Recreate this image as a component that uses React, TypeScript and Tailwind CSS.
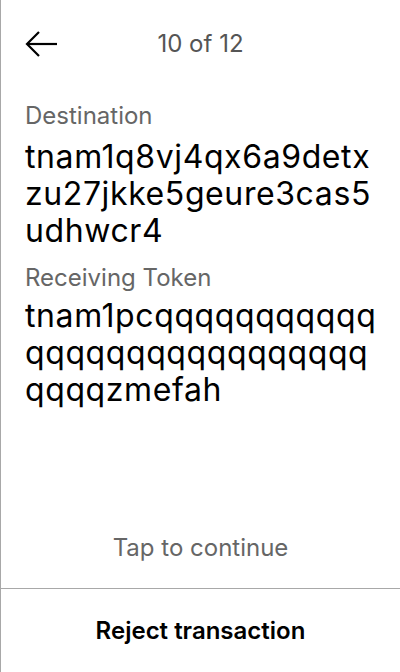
import React from "react";

const TOKEN = "tnam1pc" + "q".repeat(32) + "zmefah";

const App: React.FC = () => {
  return (
    <div
      className="flex h-[672px] w-[400px] flex-col border-l border-[#a8a8a8] bg-white text-black"
      style={{ fontFamily: "Inter, 'Liberation Sans', sans-serif" }}
    >
      <header className="relative flex h-[88px] items-center justify-center">
        <button className="absolute left-[24px] top-[30px]" aria-label="Back">
          <svg width="34" height="28" viewBox="0 0 34 28" fill="none" stroke="black" strokeWidth="2.2">
            <path d="M32 14H2" />
            <path d="M14 2L2 14l12 12" />
          </svg>
        </button>
        <span className="text-[24px] leading-[32px] text-[#555]">10 of 12</span>
      </header>

      <main className="flex flex-1 flex-col pl-[24px] pr-[20px] pt-[14px]">
        <div className="text-[24px] leading-[28px] text-[#666]">Destination</div>
        <div className="mt-[8px] break-all text-[32px] leading-[37px] tracking-[0.6px]">
          tnam1q8vj4qx6a9detxzu27jkke5geure3cas5udhwcr4
        </div>
        <div className="mt-[15px] text-[24px] leading-[28px] text-[#666]">Receiving Token</div>
        <div className="mt-[5px] break-all text-[32px] leading-[37px] tracking-[0.6px]">
          {TOKEN}
        </div>
        <div className="mt-auto pb-[24px] pr-[4px] text-center text-[24px] leading-[32px] text-[#666]">
          Tap to continue
        </div>
      </main>

      <button className="h-[84px] border-t border-[#a8a8a8] text-[24px] font-semibold">
        Reject transaction
      </button>
    </div>
  );
};

export default App;
